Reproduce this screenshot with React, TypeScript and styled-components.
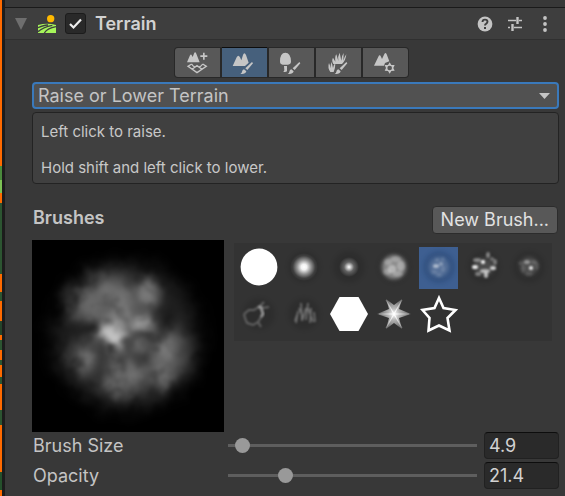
import React, { useState } from "react";
import styled, { createGlobalStyle, css } from "styled-components";

const GlobalStyle = createGlobalStyle`
  * { box-sizing: border-box; }
  body {
    margin: 0;
    background: #383838;
    color: #c4c4c4;
    font: 400 18px/24px Inter, "Liberation Sans", sans-serif;
  }
  button, input, select { font: inherit; color: inherit; margin: 0; }
  svg { display: block; }
`;

const Screen = styled.div`
  display: grid;
  grid-template-columns: 2px 3px minmax(0, 1fr);
  min-height: 100vh;
`;

const SceneEdge = styled.div`
  background: linear-gradient(
    #ff6a00 166px, #4a8a3c 166px 180px, #7cc254 180px 193px,
    #ff6a00 193px 203px, #2c5531 203px 274px, #ff6a00 274px 292px,
    #2c5531 292px 301px, #ff6a00 301px 321px, #24442a 321px 335px,
    #ff6a00 335px 340px, #2c5531 340px 350px, #ff6a00 350px 360px,
    #2c5531 360px 365px, #ff6a00 365px 377px, #2c5531 377px 384px,
    #ff6a00 384px 410px, #2c5531 410px 425px, #ff6a00 425px 472px,
    #24502b 472px 490px, #ff6a00 490px
  );
`;

const Divider = styled.div`
  background: #1c1c1c;
`;

const Inspector = styled.main`
  padding-top: 7px;
`;

const Header = styled.header`
  display: flex;
  align-items: center;
  height: 33px;
  padding: 0 5px 0 10px;
  background: #3e3e3e;
  border-top: 1px solid #1a1a1a;
  border-bottom: 1px solid #303030;
`;

const IconButton = styled.button`
  display: grid;
  place-items: center;
  width: 30px;
  height: 24px;
  padding: 0;
  border: 0;
  background: none;
`;

const FoldButton = styled(IconButton)`
  width: 12px;
`;

const HeaderActions = styled.div`
  display: flex;
  margin-left: auto;
`;

const TerrainMark = styled.svg`
  margin: 0 9px 0 11px;
`;

const Tick = styled.label`
  display: grid;
  width: 21px;
  height: 21px;
  margin-right: 9px;
  > * { grid-area: 1 / 1; }
  svg { pointer-events: none; opacity: 0; }
  input:checked + svg { opacity: 1; }
`;

const TickInput = styled.input`
  appearance: none;
  width: 21px;
  height: 21px;
  border: 1px solid #1c1c1c;
  border-radius: 3px;
  background: #292929;
`;

const Title = styled.h1`
  margin: 0;
  font-size: 18px;
  font-weight: 600;
  line-height: 24px;
  color: #d2d2d2;
`;

const Body = styled.div`
  padding: 7px 6px 6px 27px;
`;

const ToolbarRow = styled.div`
  display: flex;
  justify-content: center;
  padding-right: 9px;
  margin-bottom: 4px;
`;

const Toolbar = styled.div`
  display: flex;
  gap: 2px;
  padding: 1px;
  border-radius: 4px;
  background: #282828;
`;

const ToolButton = styled.button<{ $active: boolean }>`
  display: grid;
  place-items: center;
  width: 45px;
  height: 29px;
  padding: 0;
  border: 0;
  background: ${(p) => (p.$active ? "#46607c" : "#585858")};
  color: #c6c6c6;
  ${(p) => p.$active && css`box-shadow: 0 -1px #0d0d0d;`}
  &:first-child { border-radius: 3px 0 0 3px; }
  &:last-child { border-radius: 0 3px 3px 0; }
`;

const SelectBox = styled.div`
  display: grid;
  align-items: center;
  margin-bottom: 3px;
  > * { grid-area: 1 / 1; }
  > svg { justify-self: end; margin-right: 9px; pointer-events: none; }
`;

const Select = styled.select`
  appearance: none;
  width: 100%;
  height: 27px;
  padding: 0 28px 0 4px;
  border: 2px solid #3a79bb;
  border-radius: 4px;
  background: #515151;
  outline: none;
`;

const HelpBox = styled.section`
  margin-bottom: 22px;
  padding: 10px 8px 6px;
  border: 1px solid #232323;
  border-radius: 4px;
  background: #404040;
  font-size: 15px;
  line-height: 18px;
  color: #c8c8c8;
  p { margin: 0 0 18px; }
  p:last-child { margin: 0; }
`;

const BrushHeading = styled.div`
  display: flex;
  align-items: flex-start;
  justify-content: space-between;
  padding: 0 1px;
  margin-bottom: 6px;
`;

const SectionTitle = styled.h2`
  margin: 0;
  font-size: 18px;
  font-weight: 600;
  line-height: 24px;
`;

const NewBrush = styled.button`
  height: 28px;
  padding: 0 8px;
  border: 1px solid #2c2c2c;
  border-radius: 4px;
  background: #585858;
  color: #e2e2e2;
  line-height: 24px;
`;

const BrushArea = styled.div`
  display: flex;
  align-items: flex-start;
  gap: 10px;
  padding-right: 7px;
`;

const Palette = styled.div`
  display: grid;
  flex: 1;
  grid-template-columns: repeat(7, 39px);
  column-gap: 6px;
  row-gap: 5px;
  margin-top: 3px;
  padding: 4px 0 5px 5px;
  background: #333333;
`;

const BrushButton = styled.button<{ $active: boolean }>`
  display: flex;
  align-items: flex-start;
  justify-content: center;
  height: 42px;
  padding: 0;
  border: 0;
  background: ${(p) => (p.$active ? "#3e5f91" : "transparent")};
  svg { flex: none; }
`;

const Field = styled.div`
  display: grid;
  grid-template-columns: 195px minmax(0, 1fr) 75px;
  align-items: center;
  margin-bottom: 3px;
  padding-left: 1px;
`;

const Slider = styled.input`
  appearance: none;
  width: calc(100% - 7px);
  height: 16px;
  background: linear-gradient(#5e5e5e, #5e5e5e) center / 100% 3px no-repeat;
  &::-webkit-slider-thumb {
    appearance: none;
    width: 15px;
    height: 15px;
    border-radius: 50%;
    background: #999999;
  }
`;

const NumberBox = styled.input`
  width: 100%;
  height: 27px;
  padding: 0 4px;
  border: 1px solid #212121;
  border-top-color: #0d0d0d;
  border-radius: 4px;
  background: #2a2a2a;
  color: #d2d2d2;
`;

const PaintBrush = ({ x }: { x: number }) => (
  <path d="M35 0 L38 4 L21 24 L15 19Z M11 22 L18 28 Q15 38 0 36 Q5 33 5 29 Q6 23 11 22Z" transform={`translate(${x} 66)`} />
);

const toolIcons = [
  <g>
    <path d="M50 67 L59 46 Q62 41 65 47 L67 51 L72 38 Q75 34 78 41 L88 67Z" />
    <path d="M98 38h5v8h8v5h-8v8h-5v-8h-8v-5h8Z" />
    <path d="M64 72 L53 79 L80 98 L108 79 L97 72 M65 88 L80 77 L95 88 M64 72 Q72 86 80 77 Q88 86 97 72" fill="none" stroke="currentColor" strokeWidth="4" />
  </g>,
  <g transform="translate(-139 0)">
    <path d="M185 78 L197 52 Q202 43 207 52 L211 61 L216 45 Q220 35 225 45 L233 68 L222 78Z" />
    <PaintBrush x={208} />
  </g>,
  <g transform="translate(-283 0)">
    <path d="M330 64 Q330 38 346 38 Q362 38 363 64 Q363 74 354 74 H338 Q330 74 330 64Z M342 78 H351 V94 Q346 98 340 95 L343 91Z" />
    <PaintBrush x={353} />
  </g>,
  <g transform="translate(-427 0)">
    <path d="M493 72 Q487 61 492 53 L499 65 Q497 50 502 43 L508 63 Q506 48 512 38 L517 62 Q517 48 524 39 L523 62 Q527 49 532 43 Q530 62 519 72Z M484 96 Q475 83 480 69 L486 85 Q484 72 488 66 L492 84 Q494 73 499 70 Q499 86 494 96Z" />
    <PaintBrush x={497} />
  </g>,
  <g transform="translate(-570 0)">
    <path d="M617 77 L630 50 Q634 42 638 50 L641 57 L647 44 Q651 34 655 43 L663 64 L650 69 L647 77Z" />
    <path fillRule="evenodd" d="M664 67 L669 75 L679 75 L675 84 L679 92 L669 93 L664 101 L659 93 L649 92 L653 84 L649 75 L659 75Z M664 77 A7 7 0 1 0 664 91 A7 7 0 1 0 664 77Z" />
  </g>,
];

const toolNames = ["Create Neighbor Terrains", "Paint Terrain", "Paint Trees", "Paint Details", "Terrain Settings"];

type Blob = [cx: number, cy: number, rx: number, ry: number, alpha: number];

const haze: Blob[] = [
  [96, 98, 72, 72, 0.12], [84, 66, 42, 32, 0.24], [100, 120, 50, 38, 0.1],
  [54, 120, 16, 16, 0.22], [139, 116, 20, 32, 0.24], [95, 138, 24, 22, 0.24],
  [58, 66, 18, 18, 0.14],
];

const highlights: Blob[] = [
  [83, 96, 15, 9, 0.6], [86, 106, 8, 10, 0.45], [75, 94, 7, 6, 0.2],
  [111, 86, 9, 7, 0.5], [121, 84, 5, 7, 0.22], [119, 54, 9, 14, 0.3],
  [109, 107, 6, 6, 0.3], [94, 66, 9, 14, 0.18], [80, 50, 11, 9, 0.14],
  [88, 144, 10, 10, 0.16], [108, 134, 8, 9, 0.12], [136, 112, 9, 10, 0.14],
  [132, 140, 10, 10, 0.14], [56, 121, 9, 8, 0.16], [88, 80, 12, 10, 0.18],
];

const hollows: Blob[] = [
  [138, 82, 10, 9, 0.45], [120, 97, 9, 5, 0.35], [52, 92, 13, 9, 0.35],
  [72, 134, 8, 15, 0.35], [113, 122, 8, 8, 0.3], [101, 46, 7, 10, 0.25],
  [75, 113, 6, 8, 0.25], [98, 103, 4, 7, 0.25], [119, 145, 5, 12, 0.2],
];

const Ellipses = ({ items }: { items: Blob[] }) => (
  <>
    {items.map(([cx, cy, rx, ry, alpha]) => (
      <ellipse key={`${cx}-${cy}`} cx={cx} cy={cy} rx={rx} ry={ry} opacity={alpha} />
    ))}
  </>
);

const Spots = ({ blur, items }: { blur: string; items: Blob[] }) => (
  <g filter={`url(#${blur})`} fill="#fff"><Ellipses items={items} /></g>
);

const NoisePreview = () => (
  <svg width="192" height="192" viewBox="0 0 192 192" role="img" aria-label="Brush preview">
    <defs>
      <filter id="hazeBlur" x="0" y="0" width="192" height="192" filterUnits="userSpaceOnUse"><feGaussianBlur stdDeviation="9" /></filter>
      <filter id="spotBlur" x="0" y="0" width="192" height="192" filterUnits="userSpaceOnUse"><feGaussianBlur stdDeviation="4" /></filter>
      <filter id="cloud" x="0" y="0" width="192" height="192" filterUnits="userSpaceOnUse" colorInterpolationFilters="sRGB">
        <feTurbulence type="fractalNoise" baseFrequency="0.05" numOctaves="3" seed="8" result="noise" />
        <feDisplacementMap in="SourceGraphic" in2="noise" scale="14" xChannelSelector="R" yChannelSelector="G" result="warped" />
        <feColorMatrix in="noise" values="0 0 0 0 1  0 0 0 0 1  0 0 0 0 1  0.8 0 0 0 0.6" result="grain" />
        <feComposite in="warped" in2="grain" operator="in" />
        <feGaussianBlur stdDeviation="1.5" />
      </filter>
    </defs>
    <rect width="192" height="192" fill="#000" />
    <g filter="url(#cloud)" transform="translate(-2 -2)">
      <g filter="url(#hazeBlur)" fill="#fff"><Ellipses items={haze} /></g>
      <g filter="url(#spotBlur)" fill="#fff"><Ellipses items={highlights} /></g>
      <g filter="url(#spotBlur)" fill="#000"><Ellipses items={hollows} /></g>
    </g>
  </svg>
);

const Shade = () => <circle cx="20" cy="20" r="16" fill="#000" opacity="0.1" filter="url(#soft2)" />;

const brushes = [
  { name: "Circle", art: <circle cx="20" cy="20" r="18.4" fill="#fff" /> },
  { name: "Soft circle", art: <><Shade /><circle cx="20" cy="20" r="14" fill="url(#glow)" /></> },
  { name: "Small soft circle", art: <><Shade /><circle cx="20" cy="20" r="10" fill="url(#glowSmall)" /></> },
  {
    name: "Cloud",
    art: <><Shade /><Spots blur="soft2" items={[[20, 20, 12, 12, 0.45]]} /><Spots blur="soft1" items={[[14, 15, 4, 3, 0.2], [22, 12, 5, 3, 0.2], [27, 19, 4, 5, 0.25], [18, 22, 4, 4, 0.35], [24, 27, 5, 3, 0.2], [13, 25, 4, 3, 0.2]]} /></>,
  },
  {
    name: "Wisps",
    art: <><circle cx="20" cy="20" r="16" fill="#16335c" opacity="0.28" filter="url(#soft2)" /><Spots blur="soft2" items={[[20, 20, 10, 10, 0.18]]} /><Spots blur="soft1" items={[[17, 19, 3, 2, 0.5], [22, 17, 2, 2, 0.3], [24, 22, 2, 3, 0.1], [15, 25, 3, 2, 0.1], [18, 13, 2, 2, 0.12], [24, 12, 2, 2, 0.1], [20, 28, 3, 2, 0.1]]} /></>,
  },
  {
    name: "Spatter",
    art: <><Shade /><Spots blur="soft2" items={[[20, 20, 10, 9, 0.14]]} /><Spots blur="soft1" items={[[11, 20, 3, 2, 0.9], [19, 15, 2, 2, 1], [29, 21, 3, 2, 0.75], [21, 24, 5, 2, 0.6], [22, 28, 2, 3, 0.65], [13, 13, 4, 2, 0.4], [24, 8, 2, 3, 0.4], [31, 15, 2, 3, 0.35], [14, 27, 3, 2, 0.35], [28, 12, 2, 2, 0.3]]} /></>,
  },
  {
    name: "Speckle",
    art: <><Shade /><Spots blur="soft2" items={[[20, 19, 9, 9, 0.16]]} /><Spots blur="soft1" items={[[22, 21, 2, 2, 0.9], [18, 15, 3, 2, 0.4], [14, 22, 2, 4, 0.1], [25, 15, 3, 2, 0.14], [12, 16, 3, 2, 0.1], [28, 19, 2, 4, 0.1], [20, 27, 4, 2, 0.1]]} /></>,
  },
  {
    name: "Crack",
    art: <><Shade /><path d="M5 20 L10 16 L15 16 L21 12 L25 8 M21 12 L24 20 L19 28 L14 31 L8 29 L6 24 L5 20 M23 14 L30 13 M19 28 L22 33" fill="none" stroke="#fff" strokeWidth="2" opacity="0.26" filter="url(#soft1)" /><path d="M19 13 L22 13 L24 20 L22 23" fill="none" stroke="#fff" strokeWidth="2.4" opacity="0.4" filter="url(#soft1)" /></>,
  },
  {
    name: "Scratches",
    art: <><Shade /><path d="M12 29 L14 17 M17 9 L18 27 M24 9 L22 26 M15 14 L19 24 L22 14 M27 14 L26 29 M24 14 L29 28 M13 21 L11 27 M30 18 L31 28" fill="none" stroke="#fff" strokeWidth="1.6" opacity="0.34" filter="url(#soft1)" /></>,
  },
  { name: "Hexagon", art: <path d="M1 20 L10.5 3 H29.5 L39 20 L29.5 37 H10.5Z" fill="#fff" /> },
  {
    name: "Radiant star",
    art: <><path d="M3 20 L15 15 L12 5 L20 11 L28 5 L25 15 L37 20 L25 24 L28 35 L20 29 L12 35 L15 24Z" fill="url(#starGlow)" /><path d="M5 20H35 M12 6L28 34 M28 6L12 34" stroke="url(#starGlow)" strokeWidth="1.2" /></>,
  },
  { name: "Star outline", art: <path d="M20 4 L24.5 14 L36.5 16 L28.5 24 L30.5 36.5 L20 31.5 L9.5 36.5 L10.5 24 L3.5 16 L15.5 14Z" fill="none" stroke="#fff" strokeWidth="2.6" /> },
];

const BrushDefs = () => (
  <svg width="0" height="0" aria-hidden="true">
    <defs>
      <filter id="soft1" x="-30%" y="-30%" width="160%" height="160%"><feGaussianBlur stdDeviation="0.9" /></filter>
      <filter id="soft2" x="-30%" y="-30%" width="160%" height="160%"><feGaussianBlur stdDeviation="2" /></filter>
      <radialGradient id="glow">
        <stop offset="0" stopColor="#fff" /><stop offset="0.2" stopColor="#fff" stopOpacity="0.94" />
        <stop offset="0.5" stopColor="#fff" stopOpacity="0.48" /><stop offset="0.8" stopColor="#fff" stopOpacity="0.09" />
        <stop offset="1" stopColor="#fff" stopOpacity="0" />
      </radialGradient>
      <radialGradient id="glowSmall">
        <stop offset="0" stopColor="#fff" /><stop offset="0.2" stopColor="#fff" stopOpacity="0.72" />
        <stop offset="0.5" stopColor="#fff" stopOpacity="0.25" /><stop offset="1" stopColor="#fff" stopOpacity="0" />
      </radialGradient>
      <radialGradient id="starGlow" gradientUnits="userSpaceOnUse" cx="20" cy="20" r="19">
        <stop offset="0" stopColor="#fff" /><stop offset="0.3" stopColor="#fff" stopOpacity="0.65" />
        <stop offset="1" stopColor="#fff" stopOpacity="0.1" />
      </radialGradient>
    </defs>
  </svg>
);

function SliderField({ id, label, initial, max }: { id: string; label: string; initial: string; max: number }) {
  const [value, setValue] = useState(initial);
  return (
    <Field>
      <label htmlFor={id}>{label}</label>
      <Slider type="range" min={0} max={max} step={0.1} value={value} aria-label={label} onChange={(e) => setValue(e.target.value)} />
      <NumberBox id={id} value={value} onChange={(e) => setValue(e.target.value)} />
    </Field>
  );
}

export default function App() {
  const [tool, setTool] = useState(1);
  const [brush, setBrush] = useState(4);
  return (
    <Screen>
      <GlobalStyle />
      <SceneEdge />
      <Divider />
      <Inspector>
        <Header>
          <FoldButton aria-label="Collapse Terrain">
            <svg width="12" height="12" viewBox="0 0 12 12"><path d="M0 0H12L6 12Z" fill="#6e6e6e" /></svg>
          </FoldButton>
          <TerrainMark width="18" height="18" viewBox="0 0 54 54" aria-hidden="true">
            <circle cx="38" cy="11" r="11" fill="#ffb900" />
            <path d="M0 30 Q28 22 54 30 V54 H0Z" fill="#a6f55a" />
            <path d="M0 38 Q20 29 30 30 M0 50 Q14 37 43 31 M19 54 Q27 40 54 35" fill="none" stroke="#3e3e3e" strokeWidth="4" />
          </TerrainMark>
          <Tick>
            <TickInput type="checkbox" defaultChecked aria-label="Enable Terrain" />
            <svg width="21" height="21" viewBox="0 0 21 21"><path d="M5 11 L8.5 14.5 L16 6.5" fill="none" stroke="#ededed" strokeWidth="2.2" /></svg>
          </Tick>
          <Title>Terrain</Title>
          <HeaderActions>
            <IconButton aria-label="Help">
              <svg width="16" height="16" viewBox="0 0 16 16">
                <circle cx="8" cy="8" r="7.4" fill="#c4c4c4" />
                <path d="M5.5 6 Q5.5 3.6 8 3.6 Q10.5 3.6 10.5 5.8 Q10.5 7 9 7.8 Q8 8.3 8 9.6" fill="none" stroke="#3e3e3e" strokeWidth="1.9" />
                <rect x="7" y="11" width="2" height="2" fill="#3e3e3e" />
              </svg>
            </IconButton>
            <IconButton aria-label="Presets">
              <svg width="16" height="16" viewBox="0 0 16 16">
                <path d="M1 4.5H9 M12 4.5H15 M1 11.5H3 M7 11.5H15" stroke="#c4c4c4" strokeWidth="1.3" />
                <path d="M10.5 1V8 M5.5 8V15" stroke="#c4c4c4" strokeWidth="2.4" />
              </svg>
            </IconButton>
            <IconButton aria-label="More options">
              <svg width="4" height="16" viewBox="0 0 4 16" fill="#c4c4c4"><circle cx="2" cy="2" r="1.9" /><circle cx="2" cy="8" r="1.9" /><circle cx="2" cy="14" r="1.9" /></svg>
            </IconButton>
          </HeaderActions>
        </Header>
        <Body>
          <ToolbarRow>
            <Toolbar role="toolbar" aria-label="Terrain tools">
              {toolIcons.map((icon, i) => (
                <ToolButton key={i} $active={tool === i} aria-pressed={tool === i} aria-label={toolNames[i]} onClick={() => setTool(i)}>
                  <svg width="28" height="24" viewBox="38 33 84 72" fill="currentColor">{icon}</svg>
                </ToolButton>
              ))}
            </Toolbar>
          </ToolbarRow>
          <SelectBox>
            <Select aria-label="Paint tool">
              <option>Raise or Lower Terrain</option>
            </Select>
            <svg width="11" height="6" viewBox="0 0 11 6"><path d="M0 0H11L5.5 6Z" fill="#c4c4c4" /></svg>
          </SelectBox>
          <HelpBox>
            <p>Left click to raise.</p>
            <p>Hold shift and left click to lower.</p>
          </HelpBox>
          <BrushHeading>
            <SectionTitle>Brushes</SectionTitle>
            <NewBrush>New Brush...</NewBrush>
          </BrushHeading>
          <BrushArea>
            <NoisePreview />
            <Palette>
              {brushes.map(({ name, art }, i) => (
                <BrushButton key={name} $active={brush === i} aria-pressed={brush === i} aria-label={name} onClick={() => setBrush(i)}>
                  <svg width="40" height="40" viewBox="0 0 40 40">{art}</svg>
                </BrushButton>
              ))}
            </Palette>
          </BrushArea>
          <SliderField id="brush-size" label="Brush Size" initial="4.9" max={172} />
          <SliderField id="opacity" label="Opacity" initial="21.4" max={100} />
        </Body>
        <BrushDefs />
      </Inspector>
    </Screen>
  );
}
